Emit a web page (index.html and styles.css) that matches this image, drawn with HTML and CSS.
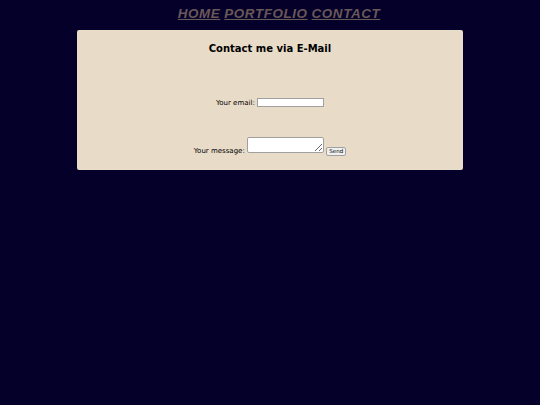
FILE: index.html
```html
<!DOCTYPE html>
<html>
<head>
<meta charset="utf-8">
<link rel="stylesheet" href="styles.css">
</head>
<body>
<nav class="nav">
  <a href="#">HOME</a>
  <a href="#">PORTFOLIO</a>
  <a href="#">CONTACT</a>
</nav>
<main class="card">
  <h1 class="title">Contact me via E-Mail</h1>
  <form class="form">
    <p class="row row-email"><label>Your email:</label> <input type="text" class="email"></p>
    <p class="row row-msg"><label>Your message:</label> <textarea class="msg"></textarea> <button type="button" class="send">Send</button></p>
  </form>
</main>
</body>
</html>
```
FILE: styles.css
```css
html, body {
  margin: 0;
  padding: 0;
  background: #04002a;
}
body {
  font-family: "DejaVu Sans", sans-serif;
}
.nav {
  display: flex;
  justify-content: center;
  gap: 4px;
  padding: 6px 0 0 18px;
  height: 26px;
  box-sizing: border-box;
}
.nav a {
  font-family: "Liberation Sans", Arial, sans-serif;
  font-style: italic;
  font-weight: bold;
  font-size: 13.4px;
  letter-spacing: 0.6px;
  color: #6a5858;
  text-decoration: underline;
  line-height: 16px;
}
.card {
  width: 386px;
  height: 140px;
  margin: 4px auto 0 auto;
  background: #e8dcc8;
  border-radius: 2px;
  box-sizing: border-box;
  padding-top: 12px;
}
.title {
  margin: 0;
  text-align: center;
  font-size: 10px;
  font-weight: bold;
  color: #000;
  line-height: 14px;
}
.form {
  display: block;
}
.row {
  margin: 0;
  text-align: center;
  font-size: 7px;
  line-height: 9px;
  color: #000;
}
.row-email {
  margin-top: 42px;
}
.email {
  width: 67px;
  height: 9px;
  box-sizing: border-box;
  border: 1px solid #a0a0a0;
  background: #fff;
  padding: 0;
  margin: 0;
  font-size: 7px;
}
.row-msg {
  margin-top: 29px;
}
.msg {
  width: 77px;
  height: 16px;
  box-sizing: border-box;
  border: 1px solid #a0a0a0;
  border-radius: 2px;
  background: #fff;
  padding: 0;
  margin: 0;
  font-size: 7px;
  resize: both;
}
.send {
  font-family: "DejaVu Sans", sans-serif;
  font-size: 5.5px;
  height: 9px;
  width: 20px;
  padding: 0;
  margin: 0;
  border: 1px solid #a0a0a0;
  border-radius: 2px;
  background: #f0f0f0;
  color: #000;
}
```
